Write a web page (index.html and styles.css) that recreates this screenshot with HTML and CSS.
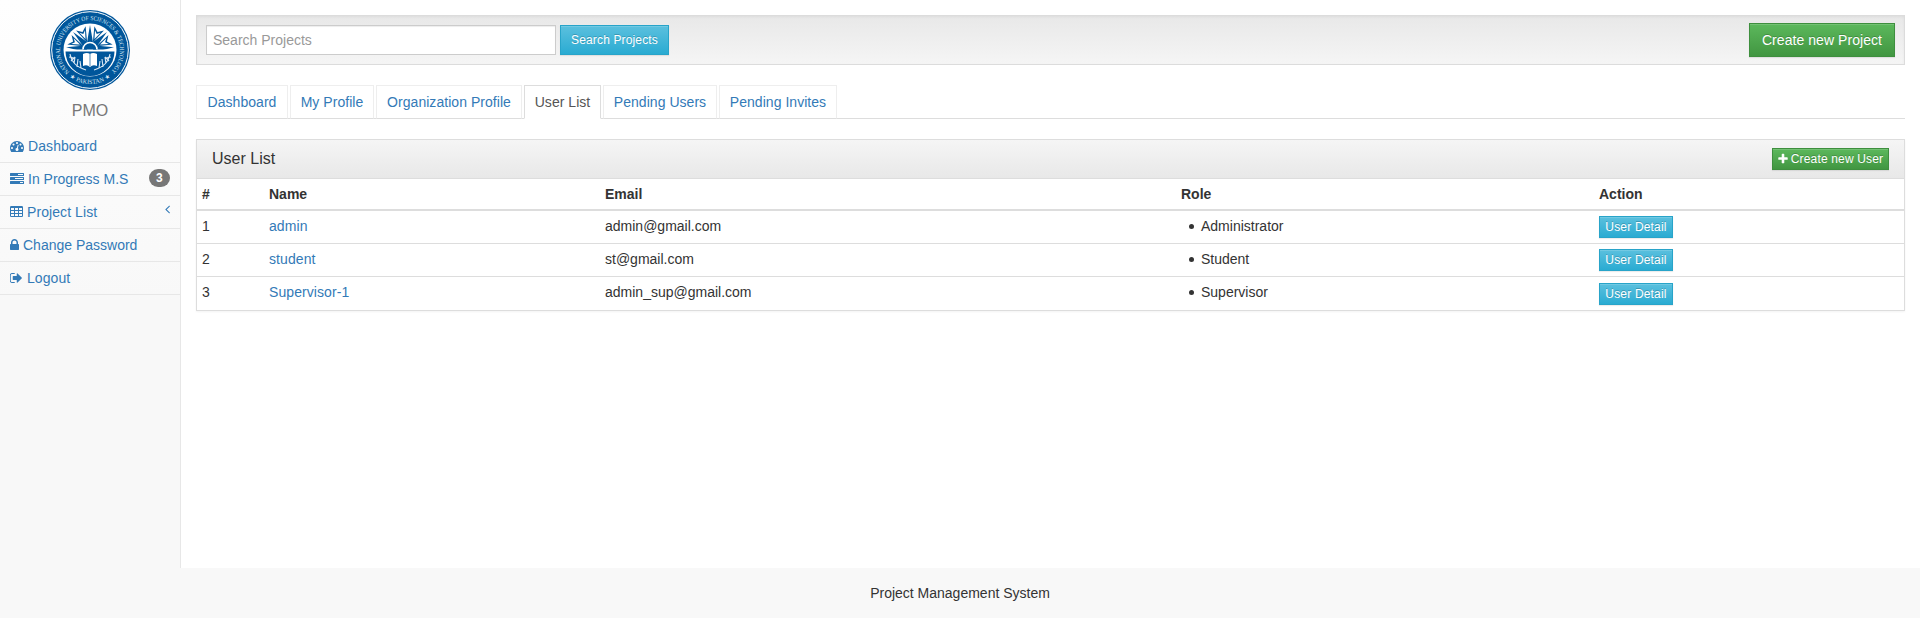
FILE: index.html
```html
<!DOCTYPE html>
<html lang="en">
<head>
<meta charset="utf-8">
<title>Project Management System</title>
<link rel="stylesheet" href="styles.css">
</head>
<body>
<div class="wrapper">
  <aside class="sidebar">
    <svg class="logo" viewBox="0 0 80 80" role="img" aria-label="University seal">
      <defs>
        <path id="arc-top" d="M19.500 62A30 30 0 1 1 60.500 62"/>
        <path id="arc-bottom" d="M16 64A34 34 0 0 0 64 64"/>
        <path id="ray" d="M40 15L43.600 36H36.400Z"/>
        <g id="dart"><path d="M34.800 16.500L40 32L45.200 16.500L40 20.500Z" fill="#00569b"/><path d="M36.900 19.800L40 28L43.100 19.800L40 22.500Z" fill="#fff"/></g>
        <clipPath id="upper"><path d="M13 13h54v26.500H13z"/></clipPath>
      </defs>
      <circle cx="40" cy="40" r="40" fill="#00569b"/>
      <circle cx="40" cy="40" r="38.300" fill="none" stroke="#fff" stroke-width="1"/>
      <circle cx="40" cy="40" r="26.500" fill="#fff"/>
      <path d="M15.500 41.500H64.500A24.500 24.500 0 0 1 15.500 41.500Z" fill="#00569b"/>
      <g clip-path="url(#upper)">
        <g fill="#00569b">
          <use href="#ray"/>
          <use href="#ray" transform="rotate(-45 40 39)"/>
          <use href="#ray" transform="rotate(45 40 39)"/>
          <use href="#ray" transform="rotate(-86 40 39)"/>
          <use href="#ray" transform="rotate(86 40 39)"/>
        </g>
        <use href="#dart" transform="rotate(-24 40 39)"/>
        <use href="#dart" transform="rotate(24 40 39)"/>
        <use href="#dart" transform="rotate(-66 40 39)"/>
        <use href="#dart" transform="rotate(66 40 39)"/>
        <circle cx="40" cy="39.500" r="7" fill="#00569b" stroke="#fff" stroke-width="1.600"/>
      </g>
      <path d="M33 44Q37 42 40 44Q43 42 47 44V56Q43 54 40 57Q37 54 33 56Z" fill="#fff"/>
      <path d="M40 44V56" stroke="#00569b" stroke-width=".7"/>
      <path d="M20 44Q22 56 36 60M60 44Q58 56 44 60M19 47l5 1M21 51l4-4M24 54l1-7M27 57l1-8M31 58l-1-7M61 47l-5 1M59 51l-4-4M56 54l-1-7M53 57l-1-8M49 58l1-7" fill="none" stroke="#dbe8f3" stroke-width="1.100"/>
      <text class="seal-text" textLength="142" lengthAdjust="spacingAndGlyphs"><textPath href="#arc-top">NATIONAL UNIVERSITY OF SCIENCES &amp; TECHNOLOGY</textPath></text>
      <text class="seal-text" text-anchor="middle"><textPath href="#arc-bottom" startOffset="50%">★ PAKISTAN ★</textPath></text>
    </svg>
    <div class="org">PMO</div>
    <nav class="menu">
      <a href="#"><svg class="icon" viewBox="0 0 1792 1792" width="14"><path d="M384 1152q0-53-37.500-90.500t-90.500-37.500-90.500 37.500-37.500 90.500 37.500 90.500 90.500 37.500 90.500-37.500 37.500-90.500zm192-448q0-53-37.500-90.500t-90.500-37.500-90.500 37.500-37.500 90.500 37.500 90.500 90.500 37.500 90.500-37.500 37.500-90.500zm428 481l101-382q6-26-7.500-48.500t-38.500-29.500-48 6.500-30 39.500l-101 382q-60 5-107 43.500t-63 98.500q-20 77 20 146t117 89 146-20 89-117q16-60-6-117t-72-91zm660-33q0-53-37.500-90.500t-90.500-37.500-90.500 37.500-37.500 90.500 37.500 90.500 90.500 37.500 90.500-37.500 37.500-90.500zm-640-640q0-53-37.500-90.500t-90.500-37.500-90.500 37.500-37.500 90.500 37.500 90.500 90.500 37.500 90.500-37.500 37.500-90.500zm448 192q0-53-37.500-90.500t-90.500-37.500-90.500 37.500-37.500 90.500 37.500 90.500 90.500 37.500 90.500-37.500 37.500-90.500zm320 448q0 261-141 483-19 29-54 29h-1402q-35 0-54-29-141-221-141-483 0-182 71-348t191-286 286-191 348-71 348 71 286 191 191 286 71 348z"/></svg><span>Dashboard</span></a>
      <a href="#"><svg class="icon" viewBox="0 0 14 14" width="14"><path fill-rule="evenodd" d="M.5 1h13a.5.5 0 0 1 .5.500v2a.5.5 0 0 1-.5.500H.5a.5.5 0 0 1-.5-.5v-2A.5.5 0 0 1 .5 1zM8 2v1h5V2zM.5 5h13a.5.5 0 0 1 .5.500v2a.5.5 0 0 1-.5.500H.5a.5.5 0 0 1-.5-.5v-2A.5.5 0 0 1 .5 5zM5 6v1h8V6zM.5 9h13a.5.5 0 0 1 .5.500v2a.5.5 0 0 1-.5.500H.5a.5.5 0 0 1-.5-.5v-2A.5.5 0 0 1 .5 9zM10 10v1h3v-1z"/></svg><span class="plain">In Progress M.S</span><b class="badge">3</b></a>
      <a href="#"><svg class="icon" viewBox="0 0 13 14" width="13"><path fill-rule="evenodd" d="M1.200 1h10.600A1.200 1.200 0 0 1 13 2.200v8.600a1.200 1.200 0 0 1-1.200 1.200H1.200A1.200 1.200 0 0 1 0 10.800V2.200A1.200 1.200 0 0 1 1.200 1zM1 3v2h3V3zM5 3v2h3V3zM9 3v2h3V3zM1 6v2h3V6zM5 6v2h3V6zM9 6v2h3V6zM1 9v2h3V9zM5 9v2h3V9zM9 9v2h3V9z"/></svg><span>Project List</span><svg class="icon arrow" viewBox="576 0 640 1792" width="5"><path d="M1203 544q0 13-10 23l-393 393 393 393q10 10 10 23t-10 23l-50 50q-10 10-23 10t-23-10l-466-466q-10-10-10-23t10-23l466-466q10-10 23-10t23 10l50 50q10 10 10 23z"/></svg></a>
      <a href="#"><svg class="icon" viewBox="320 0 1152 1792" width="9"><path d="M640 768h512v-192q0-106-75-181t-181-75-181 75-75 181v192zm832 96v576q0 40-28 68t-68 28h-960q-40 0-68-28t-28-68v-576q0-40 28-68t68-28h32v-192q0-184 132-316t316-132 316 132 132 316v192h32q40 0 68 28t28 68z"/></svg><span class="plain">Change Password</span></a>
      <a href="#"><svg class="icon" viewBox="96 0 1664 1792" width="13"><path d="M704 1440q0 4 1 20t.5 26.500-3 23.500-10 19.500-20.500 6.500h-320q-119 0-203.500-84.500t-84.500-203.500v-704q0-119 84.500-203.500t203.500-84.500h320q13 0 22.500 9.500t9.500 22.500q0 4 1 20t.5 26.500-3 23.500-10 19.500-20.500 6.500h-320q-66 0-113 47t-47 113v704q0 66 47 113t113 47h312l11.500 1 11.500 3 8 5.500 7 9 2 13.500zm928-544q0 26-19 45l-544 544q-19 19-45 19t-45-19-19-45v-288h-448q-26 0-45-19t-19-45v-384q0-26 19-45t45-19h448v-288q0-26 19-45t45-19 45 19l544 544q19 19 19 45z"/></svg><span>Logout</span></a>
    </nav>
  </aside>
  <main class="content">
    <form class="well">
      <input class="search" type="text" placeholder="Search Projects">
      <button class="btn btn-info btn-sm" type="button">Search Projects</button>
      <button class="btn btn-success push" type="button">Create new Project</button>
    </form>
    <nav class="tabs">
      <a href="#">Dashboard</a>
      <a href="#">My Profile</a>
      <a href="#">Organization Profile</a>
      <a href="#" class="active">User List</a>
      <a href="#">Pending Users</a>
      <a href="#">Pending Invites</a>
    </nav>
    <section class="panel">
      <header class="panel-heading">
        <h3>User List</h3>
        <button class="btn btn-success btn-xs create-user" type="button"><svg class="plus" viewBox="192 0 1408 1792" width="10" height="12"><path d="M1600 736v192q0 40-28 68t-68 28h-416v416q0 40-28 68t-68 28h-192q-40 0-68-28t-28-68v-416h-416q-40 0-68-28t-28-68v-192q0-40 28-68t68-28h416v-416q0-40 28-68t68-28h192q40 0 68 28t28 68v416h416q40 0 68 28t28 68z"/></svg>Create new User</button>
      </header>
      <table class="users">
        <colgroup><col class="c-num"><col class="c-name"><col class="c-email"><col class="c-role"><col></colgroup>
        <thead><tr><th>#</th><th>Name</th><th>Email</th><th>Role</th><th>Action</th></tr></thead>
        <tbody>
          <tr><td>1</td><td><a href="#">admin</a></td><td>admin@gmail.com</td><td><ul><li>Administrator</li></ul></td><td><button class="btn btn-info btn-xs" type="button">User Detail</button></td></tr>
          <tr><td>2</td><td><a href="#">student</a></td><td>st@gmail.com</td><td><ul><li>Student</li></ul></td><td><button class="btn btn-info btn-xs" type="button">User Detail</button></td></tr>
          <tr><td>3</td><td><a href="#">Supervisor-1</a></td><td>admin_sup@gmail.com</td><td><ul><li>Supervisor</li></ul></td><td><button class="btn btn-info btn-xs" type="button">User Detail</button></td></tr>
        </tbody>
      </table>
    </section>
  </main>
</div>
<footer class="footer">Project Management System</footer>
</body>
</html>
```
FILE: styles.css
```css
* { box-sizing: border-box; }
body {
  margin: 0;
  min-height: 618px;
  display: flex;
  flex-direction: column;
  background: #f8f8f8;
  color: #333;
  font: 14px/20px "Liberation Sans", Arial, sans-serif;
}
a { color: #337ab7; text-decoration: none; letter-spacing: .08px; }
.wrapper { display: flex; height: 568px; }

.sidebar {
  width: 181px;
  padding-top: 10px;
  border-right: 1px solid #e7e7e7;
  background: linear-gradient(#fefefe, #f8f8f8 300px);
}
.logo { display: block; width: 80px; height: 80px; margin: 0 auto; }
.seal-text { font: 6.2px "Liberation Serif", "DejaVu Sans", serif; fill: #dfebf5; }
.org { height: 40px; color: #777; font-size: 16px; line-height: 41px; text-align: center; }
.menu a {
  display: flex;
  align-items: center;
  gap: 4px;
  height: 33px;
  padding: 0 10px;
  border-bottom: 1px solid #e7e7e7;
}
.menu .plain { letter-spacing: 0; }
.icon { flex: none; height: 14px; fill: #337ab7; }
.badge {
  min-width: 21px;
  margin: -2px 0 0 auto;
  padding: 3px 7px;
  border-radius: 10px;
  background: #777;
  color: #fff;
  font-size: 12px;
  line-height: 12px;
  text-align: center;
}
.arrow { margin: -6px 0 0 auto; }

.content { flex: 1; padding: 15px 15px 0; background: #fff; }
.well {
  display: flex;
  align-items: center;
  gap: 4px;
  height: 50px;
  margin: 0 0 20px;
  padding: 0 9px;
  border: 1px solid #dcdcdc;
  background: linear-gradient(#e8e8e8, #f5f5f5);
  box-shadow: inset 0 1px 3px rgba(0,0,0,.05), 0 1px 0 rgba(255,255,255,.1);
}
.search {
  width: 350px;
  height: 30px;
  padding: 5px 6px;
  border: 1px solid #ccc;
  background: #fff;
  box-shadow: inset 0 1px 1px rgba(0,0,0,.075);
  font: inherit;
}
.search::placeholder { color: #999; }
.btn {
  padding: 6px 12px;
  border: 1px solid;
  color: #fff;
  font: 14px/20px "Liberation Sans", Arial, sans-serif;
  text-shadow: 0 -1px 0 rgba(0,0,0,.2);
  white-space: nowrap;
  box-shadow: inset 0 1px 0 rgba(255,255,255,.15), 0 1px 1px rgba(0,0,0,.075);
}
.btn-sm { width: 109px; padding: 5px 0; font-size: 12px; line-height: 18px; letter-spacing: .14px; }
.btn-xs { width: 74px; padding: 1px 0; font-size: 12px; line-height: 18px; letter-spacing: .18px; }
.create-user { width: 117px; letter-spacing: .16px; }
.btn-info { border-color: #28a4c9; background: linear-gradient(#5bc0de, #2aabd2); }
.btn-success { border-color: #3e8f3e; background: linear-gradient(#5cb85c, #419641); }
.push { width: 146px; margin-left: auto; padding: 6px 0; letter-spacing: .06px; }

.tabs { display: flex; gap: 2px; height: 34px; margin-bottom: 20px; border-bottom: 1px solid #ddd; }
.tabs a {
  width: 92px;
  height: 34px;
  padding: 6px 0;
  border: 1px solid #eee;
  border-bottom-color: transparent;
  letter-spacing: .04px;
  text-align: center;
  white-space: nowrap;
}
.tabs a:nth-child(2) { width: 84px; }
.tabs a:nth-child(3) { width: 146px; }
.tabs a:nth-child(4) { width: 77px; }
.tabs a:nth-child(5) { width: 114px; }
.tabs a:nth-child(6) { width: 118px; }
.tabs .active { border-color: #ddd; border-bottom-color: #fff; background: #fff; color: #555; }

.panel { border: 1px solid #ddd; box-shadow: 0 1px 2px rgba(0,0,0,.05); }
.panel-heading {
  display: flex;
  align-items: center;
  justify-content: space-between;
  height: 39px;
  padding: 0 15px;
  border-bottom: 1px solid #ddd;
  background: linear-gradient(#f5f5f5, #e8e8e8);
}
.panel-heading h3 { margin: 0; font-size: 16px; font-weight: 400; }
.plus { margin-right: 3px; fill: #fff; vertical-align: -2px; }

.users { width: 100%; table-layout: fixed; border-collapse: separate; border-spacing: 0; }
.users th { height: 32px; padding: 5px; border-bottom: 2px solid #ddd; text-align: left; }
.users td { height: 33px; padding: 5px; border-bottom: 1px solid #ddd; vertical-align: top; }
.users tr:last-child td { border-bottom: 0; }
.users ul { margin: 0; padding-left: 8px; list-style: none; }
.users li { display: flex; align-items: center; gap: 7px; }
.users li::before { content: ""; width: 5px; height: 5px; margin-top: 1px; border-radius: 50%; background: #333; }
.users .btn { display: block; }
.users tr:last-child .btn { margin-top: 1px; }
.c-num { width: 67px; }
.c-name { width: 336px; }
.c-email { width: 576px; }
.c-role { width: 418px; }

.footer { height: 50px; padding-top: 15px; text-align: center; }
```
